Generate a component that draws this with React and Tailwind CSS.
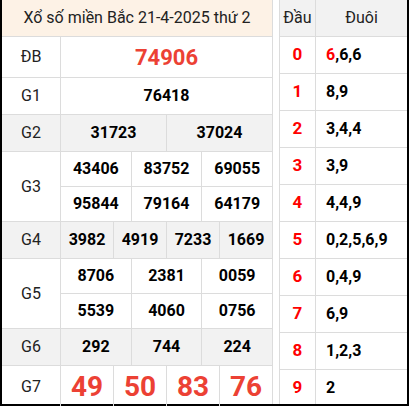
import React from "react";

const prizes = [
  { label: "ĐB", h: "h-[41px]", lines: [["74906"]], num: "text-[22px] text-[#ec4134]" },
  { label: "G1", h: "h-[37px]", lines: [["76418"]] },
  { label: "G2", h: "h-[37px]", bg: true, lines: [["31723", "37024"]] },
  {
    label: "G3",
    h: "h-[70px]",
    lines: [
      ["43406", "83752", "69055"],
      ["95844", "79164", "64179"],
    ],
  },
  { label: "G4", h: "h-[37px]", bg: true, lines: [["3982", "4919", "7233", "1669"]] },
  {
    label: "G5",
    h: "h-[70px]",
    lines: [
      ["8706", "2381", "0059"],
      ["5539", "4060", "0756"],
    ],
  },
  { label: "G6", h: "h-[37px]", bg: true, lines: [["292", "744", "224"]] },
  { label: "G7", h: "flex-1", last: true, lines: [["49", "50", "83", "76"]], num: "text-[28px] text-[#ec4134]" },
];

const loto = [
  ["0", "6,6,6", true],
  ["1", "8,9"],
  ["2", "3,4,4"],
  ["3", "3,9"],
  ["4", "4,4,9"],
  ["5", "0,2,5,6,9"],
  ["6", "0,4,9"],
  ["7", "6,9"],
  ["8", "1,2,3"],
  ["9", "2"],
];

export default function App() {
  return (
    <div className="w-[409px] h-[406px] bg-white flex border-l-2 border-r-2 border-b-2 border-black font-['Roboto','Liberation_Sans',sans-serif] text-[#222]">
      {/* ket qua */}
      <div className="w-[271px] flex flex-col border-r border-[#dcdcdc]">
        <div className="h-[37px] shrink-0 flex items-center justify-center bg-[#fdf2e6] border-b border-[#dcdcdc] text-[16px]">
          Xổ số miền Bắc 21-4-2025 thứ 2
        </div>
        {prizes.map((p) => (
          <div
            key={p.label}
            className={`${p.h} shrink-0 flex ${p.last ? "" : "border-b border-[#dcdcdc]"} ${p.bg ? "bg-[#f2f2f2]" : ""}`}
          >
            <div className="w-[58px] flex items-center justify-center text-[16px]">{p.label}</div>
            <div className="flex-1 flex flex-col border-l border-[#dcdcdc]">
              {p.lines.map((line, i) => (
                <div
                  key={i}
                  className={`flex-1 flex ${i < p.lines.length - 1 ? "border-b border-[#dcdcdc]" : ""}`}
                >
                  {line.map((n, j) => (
                    <div
                      key={j}
                      className={`flex-1 flex items-center justify-center font-bold ${j > 0 ? "border-l border-[#dcdcdc]" : ""} ${p.num ? p.num : "text-[16px] text-black"}`}
                    >
                      {n}
                    </div>
                  ))}
                </div>
              ))}
            </div>
          </div>
        ))}
      </div>

      {/* dau duoi */}
      <div className="flex-1 ml-[6px] flex flex-col border-l border-[#dcdcdc] overflow-hidden">
        <div className="h-[37px] shrink-0 flex bg-[#f2f2f2] border-b border-[#dcdcdc] text-[16px]">
          <div className="w-[35px] flex items-center justify-center">Đầu</div>
          <div className="flex-1 flex items-center justify-center border-l border-[#dcdcdc]">Đuôi</div>
        </div>
        {loto.map(([d, t, first]) => (
          <div key={d} className="h-[37px] shrink-0 flex border-b border-[#dcdcdc]">
            <div className="w-[35px] flex items-center justify-center font-bold text-[17px] text-[#ff0000]">{d}</div>
            <div className="flex-1 flex items-center pl-[10px] border-l border-[#dcdcdc] font-bold text-[16px] text-black">
              {first ? (
                <>
                  <span className="text-[#ff0000]">{t[0]}</span>
                  {t.slice(1)}
                </>
              ) : (
                t
              )}
            </div>
          </div>
        ))}
      </div>
    </div>
  );
}
